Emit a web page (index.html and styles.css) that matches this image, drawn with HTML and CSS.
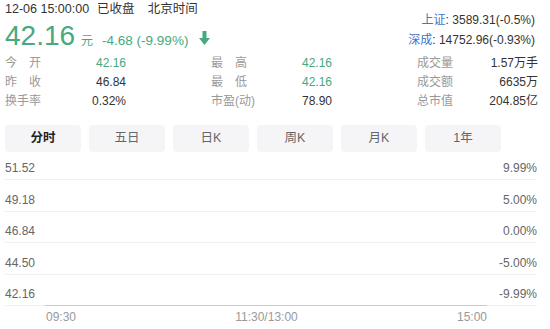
FILE: index.html
```html
<!DOCTYPE html>
<html lang="zh-CN">
<head>
    <meta charset="UTF-8">
    <meta name="viewport" content="width=device-width, initial-scale=1.0">
    <title>分时行情</title>
    <link rel="stylesheet" href="styles.css">
</head>
<body>
    <div class="quote">
        <div class="quote-head">
            <div class="quote-main">
                <div class="quote-time">12-06 15:00:00<span class="state">已收盘</span><span class="zone">北京时间</span></div>
                <div class="quote-price">
                    <span class="price">42.16</span>
                    <span class="unit">元</span>
                    <span class="change">-4.68 (-9.99%)</span>
                    <svg class="arrow" width="11" height="14" viewBox="0 0 11 14">
                        <path d="M3.5 0 H7.5 V7 H11 L5.5 14 L0 7 H3.5 Z" fill="#47a97d"/>
                    </svg>
                </div>
            </div>
            <div class="index-list">
                <div><span class="index-name">上证</span>: 3589.31(-0.5%)</div>
                <div><span class="index-name">深成</span>: 14752.96(-0.93%)</div>
            </div>
        </div>

        <div class="stats">
            <div class="stat"><span class="label">今　开</span><span class="value up">42.16</span></div>
            <div class="stat"><span class="label">最　高</span><span class="value up">42.16</span></div>
            <div class="stat"><span class="label">成交量</span><span class="value">1.57万手</span></div>
            <div class="stat"><span class="label">昨　收</span><span class="value">46.84</span></div>
            <div class="stat"><span class="label">最　低</span><span class="value up">42.16</span></div>
            <div class="stat"><span class="label">成交额</span><span class="value">6635万</span></div>
            <div class="stat"><span class="label">换手率</span><span class="value">0.32%</span></div>
            <div class="stat"><span class="label">市盈(动)</span><span class="value">78.90</span></div>
            <div class="stat"><span class="label">总市值</span><span class="value">204.85亿</span></div>
        </div>

        <div class="tabs">
            <div class="tab active">分时</div>
            <div class="tab">五日</div>
            <div class="tab">日K</div>
            <div class="tab">周K</div>
            <div class="tab">月K</div>
            <div class="tab">1年</div>
        </div>

        <div class="chart">
            <div class="chart-grid">
                <div class="grid-row first"><span>51.52</span><span>9.99%</span></div>
                <div class="grid-row"><span>49.18</span><span>5.00%</span></div>
                <div class="grid-row"><span>46.84</span><span>0.00%</span></div>
                <div class="grid-row"><span>44.50</span><span>-5.00%</span></div>
                <div class="grid-row"><span>42.16</span><span>-9.99%</span></div>
                <div class="series"></div>
            </div>
            <div class="time-axis">
                <span>09:30</span>
                <span>11:30/13:00</span>
                <span>15:00</span>
            </div>
        </div>
    </div>
</body>
</html>
```

FILE: styles.css
```css
html, body {
    margin: 0;
    padding: 0;
    background-color: #fff;
}

body {
    font-family: "Liberation Sans", "Noto Sans CJK SC", sans-serif;
    color: #333;
    overflow: hidden;
}

.quote {
    width: 532px;
    padding: 0 5px;
}

.quote-head {
    display: flex;
    justify-content: space-between;
}

.quote-time {
    font-size: 12.5px;
    line-height: 19px;
}

.quote-time .state {
    margin-left: 8px;
}

.quote-time .zone {
    margin-left: 13px;
}

.quote-price {
    display: flex;
    align-items: baseline;
    height: 34px;
    line-height: 34px;
    color: #47a97d;
}

.price {
    font-size: 28px;
}

.unit {
    font-size: 12px;
    margin-left: 6px;
}

.change {
    font-size: 13.5px;
    margin-left: 9px;
}

.arrow {
    align-self: center;
    margin-left: 11px;
    margin-top: 4px;
}

.index-list {
    padding-top: 10px;
    font-size: 12px;
    line-height: 20px;
    text-align: right;
    margin-right: 2px;
}

.index-name {
    color: #4474c6;
}

.stats {
    display: grid;
    grid-template-columns: repeat(3, 121px);
    column-gap: 85px;
    margin-top: 1px;
    font-size: 12px;
    line-height: 19px;
}

.stat {
    display: flex;
    justify-content: space-between;
}

.stat .label {
    color: #999;
}

.stat .value {
    color: #333;
}

.stat .value.up {
    color: #47a97d;
}

.tabs {
    display: flex;
    gap: 8px;
    margin-top: 14px;
}

.tab {
    width: 76px;
    height: 27px;
    line-height: 27px;
    text-align: center;
    font-size: 12.5px;
    color: #666;
    background-color: #f5f5f7;
    border-radius: 4px;
}

.tab.active {
    color: #222;
    font-weight: bold;
}

.chart-grid {
    position: relative;
}

.grid-row {
    display: flex;
    justify-content: space-between;
    align-items: flex-end;
    box-sizing: border-box;
    height: 31.5px;
    padding-bottom: 4px;
    border-bottom: 1px solid #f0f0f0;
    font-size: 12px;
    line-height: 14px;
    color: #666;
}

.grid-row.first {
    height: 28px;
}

.series {
    position: absolute;
    left: 40px;
    right: 50px;
    bottom: 0;
    height: 1.5px;
    background-color: #f4c86a;
}

.time-axis {
    display: flex;
    justify-content: space-between;
    padding: 3px 50px 0 41px;
    font-size: 12px;
    line-height: 16px;
    color: #999;
}
```
